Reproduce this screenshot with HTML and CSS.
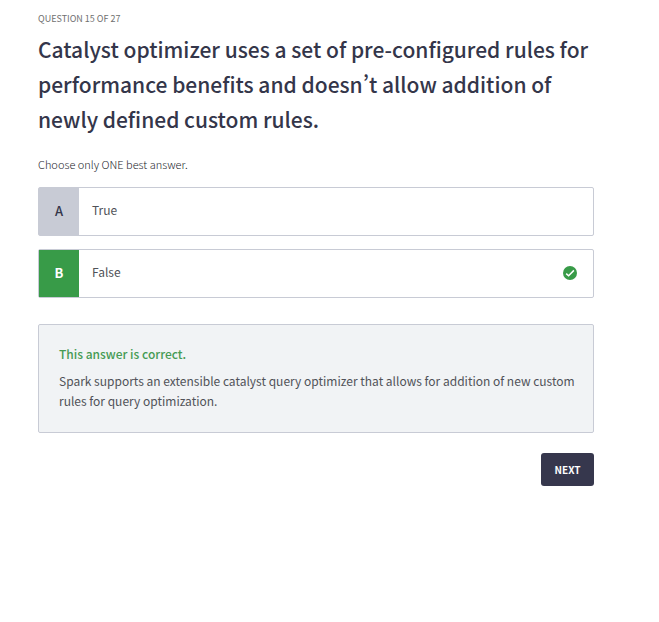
FILE: index.html
```html
<!DOCTYPE html>
<html lang="en">
<head>
<meta charset="utf-8">
<meta name="viewport" content="width=device-width, initial-scale=1">
<title>Question 15 of 27</title>
<link rel="stylesheet" href="styles.css">
</head>
<body>
<main class="quiz">
  <p class="progress">QUESTION 15 OF 27</p>
  <h1 class="question">Catalyst optimizer uses a set of pre-configured rules for performance benefits and doesn’t allow addition of newly defined custom rules.</h1>
  <p class="hint">Choose only ONE best answer.</p>
  <div class="answers">
    <button class="answer" type="button">
      <span class="letter">A</span>
      <span class="label">True</span>
    </button>
    <button class="answer correct" type="button">
      <span class="letter">B</span>
      <span class="label">False</span>
      <svg class="check" viewBox="0 0 14 14" aria-hidden="true"><circle cx="7" cy="7" r="7"/><path d="M3.2 7.6 5.6 9.8l5.3-5.4"/></svg>
    </button>
  </div>
  <section class="feedback">
    <h2 class="verdict">This answer is correct.</h2>
    <p class="explanation">Spark supports an extensible catalyst query optimizer that allows for addition of new custom rules for query optimization.</p>
  </section>
  <div class="actions">
    <button class="next" type="button">NEXT</button>
  </div>
</main>
</body>
</html>
```
FILE: styles.css
```css
* {
  box-sizing: border-box;
}

body {
  margin: 0;
  background: #fff;
  color: #505258;
  font-family: "Source Sans Pro", "Noto Sans CJK SC", "Noto Sans", sans-serif;
  font-variant-east-asian: proportional-width;
}

h1,
h2,
p {
  margin: 0;
}

.quiz {
  padding: 12px 65px 24px 38px;
}

.progress {
  color: #707070;
  font-size: 9px;
  line-height: 14px;
}

.question {
  margin-top: 6px;
  color: #34364a;
  font-size: 21px;
  font-weight: 500;
  line-height: 35px;
}

.hint {
  margin-top: 19px;
  color: #24262c;
  font-size: 11px;
  font-weight: 300;
  line-height: 16px;
}

.answers {
  display: grid;
  gap: 13px;
  margin-top: 15px;
}

.answer {
  display: flex;
  align-items: center;
  width: 100%;
  height: 49px;
  padding: 0 16px 0 0;
  border: 1px solid #c8cbd5;
  border-radius: 2px;
  background: #fff;
  color: inherit;
  font: inherit;
  font-size: 12px;
  font-variant-east-asian: inherit;
  text-align: left;
}

.letter {
  display: grid;
  place-items: center;
  align-self: stretch;
  width: 40px;
  padding-bottom: 2px;
  background: #c8cbd5;
  color: #34364a;
  font-size: 13px;
  font-weight: 500;
}

.label {
  flex: 1;
  padding: 0 0 4px 13px;
}

.correct .letter {
  background: #389b48;
  color: #fff;
  font-weight: 700;
}

.check {
  width: 14px;
  height: 14px;
  margin-bottom: 2px;
  fill: #389b48;
}

.check path {
  fill: none;
  stroke: #fff;
  stroke-width: 1.5;
}

.feedback {
  margin-top: 26px;
  padding: 19px 16px 21px 20px;
  border: 1px solid #c8cbd5;
  border-radius: 2px;
  background: #f1f3f5;
}

.verdict {
  color: #469b54;
  font-size: 12px;
  font-weight: 500;
  line-height: 20px;
}

.explanation {
  margin-top: 7px;
  font-size: 12px;
  line-height: 20px;
}

.actions {
  display: flex;
  justify-content: flex-end;
  margin-top: 20px;
}

.next {
  min-width: 53px;
  padding: 0 12px;
  border: 0;
  border-radius: 3px;
  background: #36374d;
  color: #fff;
  font: inherit;
  font-size: 10px;
  font-weight: 700;
  line-height: 33px;
}
```
